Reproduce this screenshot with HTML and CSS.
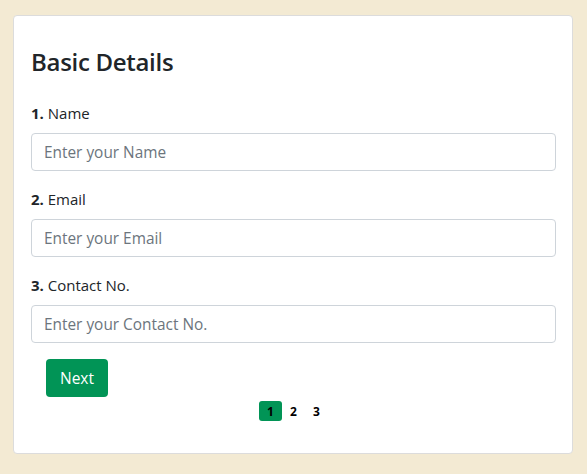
FILE: index.html
```html
<!DOCTYPE html>
<html>
<head>
<meta charset="utf-8">
<link rel="stylesheet" href="styles.css">
</head>
<body>
<div class="page">
  <div class="card">
    <h2 class="title">Basic Details</h2>
    <div class="group">
      <label class="label"><b>1.</b> Name</label>
      <input class="input" type="text" placeholder="Enter your Name">
    </div>
    <div class="group">
      <label class="label"><b>2.</b> Email</label>
      <input class="input" type="text" placeholder="Enter your Email">
    </div>
    <div class="group">
      <label class="label"><b>3.</b> Contact No.</label>
      <input class="input" type="text" placeholder="Enter your Contact No.">
    </div>
    <div class="actions">
      <button class="btn">Next</button>
    </div>
    <div class="pager">
      <span class="page-item active">1</span>
      <span class="page-item">2</span>
      <span class="page-item">3</span>
    </div>
  </div>
</div>
</body>
</html>
```
FILE: styles.css
```css
* { box-sizing: border-box; }
html, body { margin: 0; padding: 0; }
body {
  background: #f3ead3;
  font-family: "Open Sans", "Noto Sans", sans-serif;
  color: #212529;
  width: 587px;
  height: 474px;
}
.page {
  padding: 15px 14px 20px 13px;
}
.card {
  background: #fff;
  border: 1px solid #dcdcdc;
  border-radius: 4px;
  padding: 16px 16px 31px 17px;
  height: 439px;
}
.title {
  margin: 15px 0 25px 0;
  font-size: 24px;
  font-weight: 600;
  line-height: 29px;
  letter-spacing: -0.3px;
}
.group { margin-bottom: 16px; }
.label {
  display: block;
  font-size: 15px;
  line-height: 24px;
  margin-bottom: 8px;
}
.label b { font-weight: 700; }
.input {
  display: block;
  width: 100%;
  height: 38px;
  border: 1px solid #ced4da;
  border-radius: 4px;
  padding: 6px 12px;
  font-family: inherit;
  font-size: 15.4px;
  color: #495057;
  background: #fff;
  outline: none;
}
.input::placeholder { color: #6c757d; }
.actions { padding-left: 15px; }
.btn {
  background: #019456;
  color: #fff;
  border: none;
  border-radius: 4px;
  height: 38px;
  padding: 0 14px;
  font-family: inherit;
  font-size: 15.5px;
}
.pager {
  display: flex;
  justify-content: center;
  margin-top: 4px;
}
.page-item {
  width: 23px;
  height: 20px;
  display: flex;
  align-items: center;
  justify-content: center;
  font-size: 12px;
  font-weight: 700;
  color: #000;
  border-radius: 3px;
}
.page-item.active { background: #019456; }
```
